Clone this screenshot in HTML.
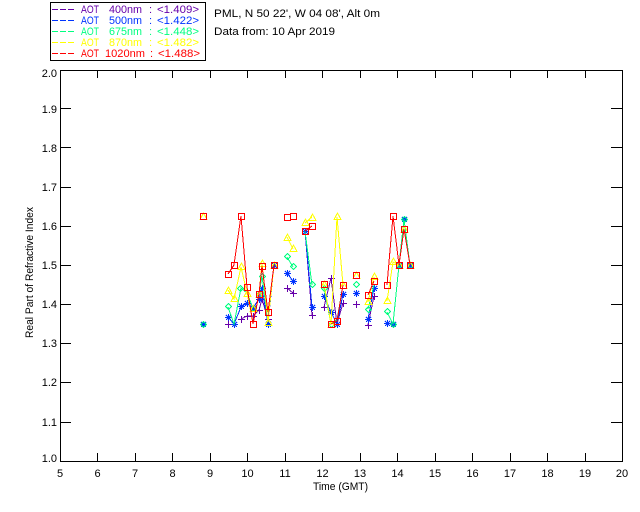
<!DOCTYPE html>
<html><head><meta charset="utf-8"><style>
html,body{margin:0;padding:0;background:#fff;width:640px;height:512px;overflow:hidden}
svg{display:block}
text{font-family:"Liberation Sans",sans-serif;font-size:11px;fill:#000;stroke:none}
.l{shape-rendering:crispEdges;fill:none;stroke-width:1}
.m{fill:none;stroke-width:1;shape-rendering:crispEdges}
.x{text-anchor:middle}.y{text-anchor:end}
.pu{stroke:#6600aa}.bl{stroke:#0033ff}.gr{stroke:#00ff80}.ye{stroke:#ffff00}.re{stroke:#ff0000}
</style></head><body>
<svg width="640" height="512" viewBox="0 0 640 512" xmlns="http://www.w3.org/2000/svg">
<defs>
<g id="s" class="m"><rect x="-3" y="-3" width="6" height="6"/></g>
<g id="t" class="m"><path d="M0-3.5L3.5 3H-3.5Z"/></g>
<g id="d" class="m"><path d="M0-3L3 0L0 3L-3 0Z"/></g>
<g id="a" class="m"><path d="M0-3.5V3.5M-3.5 0H3.5M-2.5-2.5L2.5 2.5M-2.5 2.5L2.5-2.5"/></g>
<g id="p" class="m"><path d="M0-3.5V3.5M-3.5 0H3.5"/></g>
</defs>

<path class="l" stroke="#000" d="M60.5 70.5H622.5V461.5H60.5ZM97.5 70V78M135.5 70V78M172.5 70V78M210.5 70V78M247.5 70V78M285.5 70V78M322.5 70V78M360.5 70V78M397.5 70V78M435.5 70V78M472.5 70V78M510.5 70V78M547.5 70V78M585.5 70V78M97.5 461V453M135.5 461V453M172.5 461V453M210.5 461V453M247.5 461V453M285.5 461V453M322.5 461V453M360.5 461V453M397.5 461V453M435.5 461V453M472.5 461V453M510.5 461V453M547.5 461V453M585.5 461V453M60 108.5H71M60 147.5H71M60 187.5H71M60 226.5H71M60 265.5H71M60 304.5H71M60 343.5H71M60 382.5H71M60 422.5H71M622 108.5H611M622 147.5H611M622 187.5H611M622 226.5H611M622 265.5H611M622 304.5H611M622 343.5H611M622 382.5H611M622 422.5H611"/>

<g class="x">
<text x="60" y="477">5</text><text x="97.5" y="477">6</text><text x="135" y="477">7</text><text x="172.5" y="477">8</text><text x="210" y="477">9</text><text x="247.5" y="477">10</text><text x="285" y="477">11</text><text x="322.5" y="477">12</text><text x="360" y="477">13</text><text x="397.5" y="477">14</text><text x="435" y="477">15</text><text x="472.5" y="477">16</text><text x="510" y="477">17</text><text x="547.5" y="477">18</text><text x="585" y="477">19</text><text x="622" y="477">20</text>
</g>
<g class="y">
<text x="57" y="77">2.0</text><text x="57" y="113">1.9</text><text x="57" y="152">1.8</text><text x="57" y="191">1.7</text><text x="57" y="230">1.6</text><text x="57" y="269">1.5</text><text x="57" y="308">1.4</text><text x="57" y="347">1.3</text><text x="57" y="386">1.2</text><text x="57" y="426">1.1</text><text x="57" y="462">1.0</text>
</g>
<text x="313" y="490" textLength="55" lengthAdjust="spacingAndGlyphs">Time (GMT)</text>
<text transform="translate(33 338) rotate(-90)" textLength="131" lengthAdjust="spacingAndGlyphs">Real Part of Refractive Index</text>

<text x="214" y="17" textLength="166" lengthAdjust="spacingAndGlyphs">PML, N 50 22', W 04 08', Alt 0m</text>
<text x="214" y="35" textLength="121" lengthAdjust="spacingAndGlyphs">Data from: 10 Apr 2019</text>

<rect class="l" x="50.5" y="2.5" width="155" height="58" stroke="#000"/>
<g class="l" stroke-dasharray="6 2">
<path class="pu" d="M52 9.5H75"/><path class="bl" d="M52 20.5H75"/><path class="gr" d="M52 31.5H75"/><path class="ye" d="M52 42.5H75"/><path class="re" d="M52 53.5H75"/>
</g>
<g style="fill:#6600aa"><text style="fill:inherit" x="81" y="13" textLength="18" lengthAdjust="spacingAndGlyphs">AOT</text><text style="fill:inherit" x="109" y="13" textLength="33" lengthAdjust="spacingAndGlyphs">400nm</text><text style="fill:inherit" x="149" y="13">:</text><text style="fill:inherit" x="157" y="13" textLength="42" lengthAdjust="spacingAndGlyphs">&lt;1.409&gt;</text></g>
<g style="fill:#0033ff"><text style="fill:inherit" x="81" y="24" textLength="18" lengthAdjust="spacingAndGlyphs">AOT</text><text style="fill:inherit" x="109" y="24" textLength="33" lengthAdjust="spacingAndGlyphs">500nm</text><text style="fill:inherit" x="149" y="24">:</text><text style="fill:inherit" x="157" y="24" textLength="42" lengthAdjust="spacingAndGlyphs">&lt;1.422&gt;</text></g>
<g style="fill:#00ff80"><text style="fill:inherit" x="81" y="35" textLength="18" lengthAdjust="spacingAndGlyphs">AOT</text><text style="fill:inherit" x="109" y="35" textLength="33" lengthAdjust="spacingAndGlyphs">675nm</text><text style="fill:inherit" x="149" y="35">:</text><text style="fill:inherit" x="157" y="35" textLength="42" lengthAdjust="spacingAndGlyphs">&lt;1.448&gt;</text></g>
<g style="fill:#ffff00"><text style="fill:inherit" x="81" y="46" textLength="18" lengthAdjust="spacingAndGlyphs">AOT</text><text style="fill:inherit" x="109" y="46" textLength="33" lengthAdjust="spacingAndGlyphs">870nm</text><text style="fill:inherit" x="149" y="46">:</text><text style="fill:inherit" x="157" y="46" textLength="42" lengthAdjust="spacingAndGlyphs">&lt;1.482&gt;</text></g>
<g style="fill:#ff0000"><text style="fill:inherit" x="81" y="57" textLength="18" lengthAdjust="spacingAndGlyphs">AOT</text><text style="fill:inherit" x="105" y="57" textLength="40" lengthAdjust="spacingAndGlyphs">1020nm</text><text style="fill:inherit" x="150" y="57">:</text><text style="fill:inherit" x="158" y="57" textLength="42" lengthAdjust="spacingAndGlyphs">&lt;1.488&gt;</text></g>

<!-- purple -->
<g class="pu">
<path class="l" d="M241 319L247 316L253 316L259 310L262 299L268 319L274 265M287 288L293 293M305 231L312 315M324 307L331 278L337 324L343 303M368 325L374 296M387 323L393 324"/>
<use href="#p" x="228.5" y="324.5"/><use href="#p" x="234.5" y="324.5"/><use href="#p" x="241.5" y="319.5"/><use href="#p" x="247.5" y="316.5"/><use href="#p" x="253.5" y="316.5"/><use href="#p" x="259.5" y="310.5"/><use href="#p" x="262.5" y="299.5"/><use href="#p" x="268.5" y="319.5"/><use href="#p" x="274.5" y="265.5"/><use href="#p" x="287.5" y="288.5"/><use href="#p" x="293.5" y="293.5"/><use href="#p" x="305.5" y="231.5"/><use href="#p" x="312.5" y="315.5"/><use href="#p" x="324.5" y="307.5"/><use href="#p" x="331.5" y="278.5"/><use href="#p" x="337.5" y="324.5"/><use href="#p" x="343.5" y="303.5"/><use href="#p" x="356.5" y="304.5"/><use href="#p" x="368.5" y="325.5"/><use href="#p" x="374.5" y="296.5"/><use href="#p" x="387.5" y="323.5"/>
</g>
<!-- blue -->
<g class="bl">
<path class="l" d="M228 317L234 324L241 307L247 303L253 308L259 299L262 288L268 324L274 265M287 273L293 281M305 231L312 307M324 296L331 312L337 324L343 294M368 319L374 288M387 323L393 324"/>
<use href="#a" x="203.5" y="324.5"/><use href="#a" x="228.5" y="317.5"/><use href="#a" x="234.5" y="324.5"/><use href="#a" x="241.5" y="306.5"/><use href="#a" x="247.5" y="303.5"/><use href="#a" x="253.5" y="308.5"/><use href="#a" x="259.5" y="299.5"/><use href="#a" x="262.5" y="288.5"/><use href="#a" x="268.5" y="324.5"/><use href="#a" x="274.5" y="265.5"/><use href="#a" x="287.5" y="273.5"/><use href="#a" x="293.5" y="281.5"/><use href="#a" x="305.5" y="231.5"/><use href="#a" x="312.5" y="307.5"/><use href="#a" x="324.5" y="296.5"/><use href="#a" x="331.5" y="312.5"/><use href="#a" x="337.5" y="324.5"/><use href="#a" x="343.5" y="294.5"/><use href="#a" x="356.5" y="293.5"/><use href="#a" x="368.5" y="319.5"/><use href="#a" x="374.5" y="288.5"/><use href="#a" x="387.5" y="323.5"/><use href="#a" x="393.5" y="324.5"/><use href="#a" x="399.5" y="265.5"/><use href="#a" x="404.5" y="219.5"/><use href="#a" x="410.5" y="265.5"/>
</g>
<!-- green -->
<g class="gr">
<path class="l" d="M228 307L234 324L241 288L247 293L253 308M259 294L262 276L268 322L274 265M287 257L293 267M305 231L312 285M324 288L331 324L337 320L343 285M368 309L374 285M387 312L393 324L399 265L404 219L410 265"/>
<use href="#d" x="228.5" y="306.5"/><use href="#d" x="240.5" y="288.5"/><use href="#d" x="253.5" y="308.5"/><use href="#d" x="259.5" y="294.5"/><use href="#d" x="262.5" y="276.5"/><use href="#d" x="287.5" y="256.5"/><use href="#d" x="293.5" y="266.5"/><use href="#d" x="312.5" y="284.5"/><use href="#d" x="324.5" y="288.5"/><use href="#d" x="331.5" y="324.5"/><use href="#d" x="356.5" y="284.5"/><use href="#d" x="368.5" y="309.5"/><use href="#d" x="387.5" y="311.5"/><use href="#d" x="393.5" y="324.5"/><use href="#d" x="399.5" y="265.5"/><use href="#d" x="404.5" y="219.5"/><use href="#d" x="410.5" y="265.5"/>
<use href="#d" x="203.5" y="324.5"/>
</g>
<!-- yellow -->
<g class="ye">
<path class="l" d="M228 290L234 299L241 267L247 293L253 322M259 294L262 263L268 322L274 265M287 237L293 249M305 223L312 217M324 284L331 324L337 217L343 285M368 302L374 277M387 301L393 262L399 265L404 229L410 265"/>
<use href="#t" x="203.5" y="216.5"/><use href="#t" x="228.5" y="290.5"/><use href="#t" x="234.5" y="298.5"/><use href="#t" x="241.5" y="266.5"/><use href="#t" x="247.5" y="293.5"/><use href="#t" x="253.5" y="308.5"/><use href="#t" x="259.5" y="294.5"/><use href="#t" x="262.5" y="263.5"/><use href="#t" x="268.5" y="322.5"/><use href="#t" x="274.5" y="265.5"/><use href="#t" x="287.5" y="237.5"/><use href="#t" x="293.5" y="248.5"/><use href="#t" x="305.5" y="222.5"/><use href="#t" x="312.5" y="217.5"/><use href="#t" x="324.5" y="284.5"/><use href="#t" x="331.5" y="324.5"/><use href="#t" x="337.5" y="216.5"/><use href="#t" x="343.5" y="285.5"/><use href="#t" x="356.5" y="275.5"/><use href="#t" x="368.5" y="301.5"/><use href="#t" x="374.5" y="276.5"/><use href="#t" x="387.5" y="300.5"/><use href="#t" x="393.5" y="261.5"/><use href="#t" x="399.5" y="265.5"/><use href="#t" x="404.5" y="229.5"/><use href="#t" x="410.5" y="265.5"/>
</g>
<!-- red -->
<g class="re">
<path class="l" d="M228 274L234 265L241 216L247 287L253 324L259 294L262 266L268 312L274 265M305 231L312 226M331 324L337 321L343 285M368 295L374 281M387 285L393 216L399 265L404 229L410 265"/>
<use href="#s" x="203.5" y="216.5"/><use href="#s" x="228.5" y="274.5"/><use href="#s" x="234.5" y="265.5"/><use href="#s" x="241.5" y="216.5"/><use href="#s" x="247.5" y="287.5"/><use href="#s" x="253.5" y="324.5"/><use href="#s" x="259.5" y="294.5"/><use href="#s" x="262.5" y="266.5"/><use href="#s" x="268.5" y="312.5"/><use href="#s" x="274.5" y="265.5"/><use href="#s" x="287.5" y="217.5"/><use href="#s" x="293.5" y="216.5"/><use href="#s" x="305.5" y="231.5"/><use href="#s" x="312.5" y="226.5"/><use href="#s" x="324.5" y="284.5"/><use href="#s" x="331.5" y="324.5"/><use href="#s" x="337.5" y="321.5"/><use href="#s" x="343.5" y="285.5"/><use href="#s" x="356.5" y="275.5"/><use href="#s" x="368.5" y="295.5"/><use href="#s" x="374.5" y="281.5"/><use href="#s" x="387.5" y="285.5"/><use href="#s" x="393.5" y="216.5"/><use href="#s" x="399.5" y="265.5"/><use href="#s" x="404.5" y="229.5"/><use href="#s" x="410.5" y="265.5"/>
</g>
</svg>
</body></html>
